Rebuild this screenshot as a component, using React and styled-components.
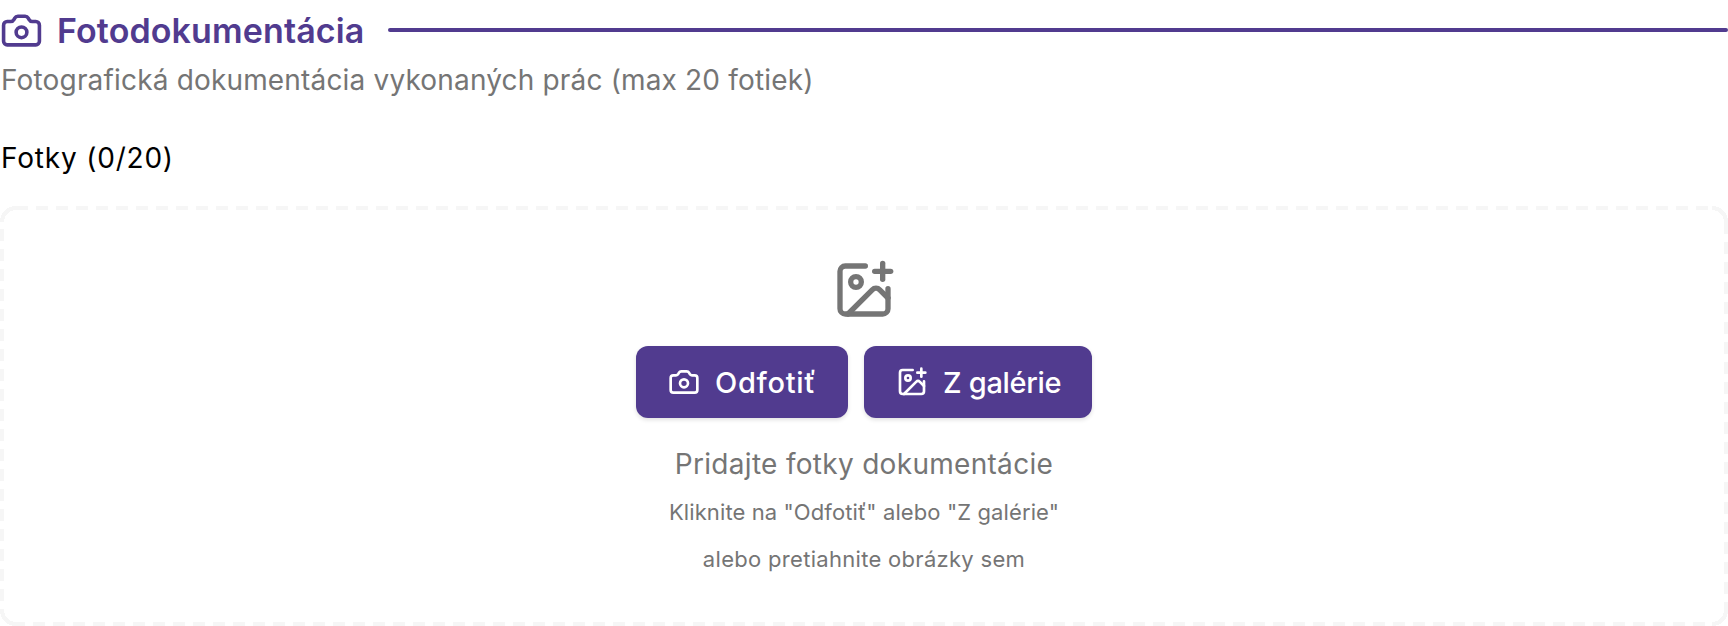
import styled, { createGlobalStyle } from "styled-components"
import { Camera, ImagePlus } from "lucide-react"

const DASH = "#F6F6F6"

const GlobalStyle = createGlobalStyle`
    * {
        box-sizing: border-box;
    }
    body {
        margin: 0;
        background: #FFFFFF;
        font-family: "Inter", "Noto Sans", sans-serif;
    }
`
const StyledSection = styled.section`
    width: 100%;
    height: 626px;
    overflow: hidden;
    display: flex;
    flex-direction: column;
`
const StyledHeader = styled.div`
    display: flex;
    align-items: center;
    gap: 14px;
    height: 60px;
`
const StyledTitle = styled.h2`
    margin: 0;
    color: #513B8F;
    font-size: 34px;
    font-weight: 600;
    letter-spacing: 0.12px;
    white-space: nowrap;
`
const StyledLine = styled.div`
    flex: 1;
    height: 4px;
    margin-left: 10px;
    border-radius: 2px;
    background: #513B8F;
`
const StyledSubtitle = styled.p`
    margin: 0 0 0 1px;
    color: #757575;
    font-size: 28px;
    line-height: 40px;
    letter-spacing: 0.17px;
`
const StyledLabel = styled.div`
    margin: 38px 0 0 1px;
    color: #000000;
    font-size: 28px;
    line-height: 40px;
    letter-spacing: 0.8px;
`
// border: dashed draws 8px dashes here, the reference has 12px dashes every 20px
const StyledDropzone = styled.div`
    margin-top: 28px;
    flex: 1;
    display: flex;
    flex-direction: column;
    align-items: center;
    padding-top: 52px;
    background-repeat: no-repeat;
    background-image:
        repeating-linear-gradient(90deg, ${DASH} 0 12px, transparent 12px 20px),
        repeating-linear-gradient(90deg, ${DASH} 0 12px, transparent 12px 20px),
        repeating-linear-gradient(180deg, transparent 0 7px, ${DASH} 7px 19px, transparent 19px 20px),
        repeating-linear-gradient(180deg, ${DASH} 0 12px, transparent 12px 20px),
        radial-gradient(circle at 100% 100%, transparent 12px, ${DASH} 12px 16px, transparent 16px),
        radial-gradient(circle at 0 100%, transparent 12px, ${DASH} 12px 16px, transparent 16px),
        radial-gradient(circle at 100% 0, transparent 12px, ${DASH} 12px 16px, transparent 16px),
        radial-gradient(circle at 0 0, transparent 12px, ${DASH} 12px 16px, transparent 16px);
    background-size:
        calc(100% - 32px) 4px,
        calc(100% - 32px) 4px,
        4px calc(100% - 32px),
        4px calc(100% - 32px),
        16px 16px,
        16px 16px,
        16px 16px,
        16px 16px;
    background-position:
        16px 0,
        13px 100%,
        0 16px,
        100% 16px,
        0 0,
        100% 0,
        0 100%,
        100% 100%;
`
const StyledButtonRow = styled.div`
    display: flex;
    gap: 16px;
    margin-top: 24px;
`
const StyledButton = styled.button`
    display: flex;
    align-items: center;
    gap: 15px;
    width: ${props => props.$width}px;
    height: 72px;
    padding: 0 0 0 32px;
    border: none;
    border-radius: 12px;
    background: #513B8F;
    color: #FFFFFF;
    font-family: inherit;
    font-size: 29px;
    font-weight: 500;
    letter-spacing: ${props => props.$tracking}px;
    box-shadow: 0 2px 4px rgba(0, 0, 0, 0.12);
`
const StyledPrompt = styled.p`
    margin: 26px 0 0;
    color: #757575;
    font-size: 28px;
    line-height: 40px;
    letter-spacing: 0.3px;
`
const StyledHint = styled.p`
    margin: ${props => props.$top}px 0 0;
    color: #757575;
    font-size: 22px;
    line-height: 32px;
    letter-spacing: ${props => props.$tracking}px;
`

const App = () => {
    return (
        <>
            <GlobalStyle />
            <StyledSection>
                <StyledHeader>
                    <Camera size={43} color="#513B8F" strokeWidth={2} />
                    <StyledTitle>Fotodokumentácia</StyledTitle>
                    <StyledLine />
                </StyledHeader>
                <StyledSubtitle>Fotografická dokumentácia vykonaných prác (max 20 fotiek)</StyledSubtitle>
                <StyledLabel>Fotky (0/20)</StyledLabel>
                <StyledDropzone>
                    <ImagePlus size={64} color="#757575" strokeWidth={2} />
                    <StyledButtonRow>
                        <StyledButton $width={212} $tracking={0.7}>
                            <Camera size={32} strokeWidth={2} />
                            Odfotiť
                        </StyledButton>
                        <StyledButton $width={228} $tracking={-0.3}>
                            <ImagePlus size={32} strokeWidth={2} />
                            Z galérie
                        </StyledButton>
                    </StyledButtonRow>
                    <StyledPrompt>Pridajte fotky dokumentácie</StyledPrompt>
                    <StyledHint $top={12} $tracking={0.1}>Kliknite na "Odfotiť" alebo "Z galérie"</StyledHint>
                    <StyledHint $top={15} $tracking={0.3}>alebo pretiahnite obrázky sem</StyledHint>
                </StyledDropzone>
            </StyledSection>
        </>
    )
}

export default App
